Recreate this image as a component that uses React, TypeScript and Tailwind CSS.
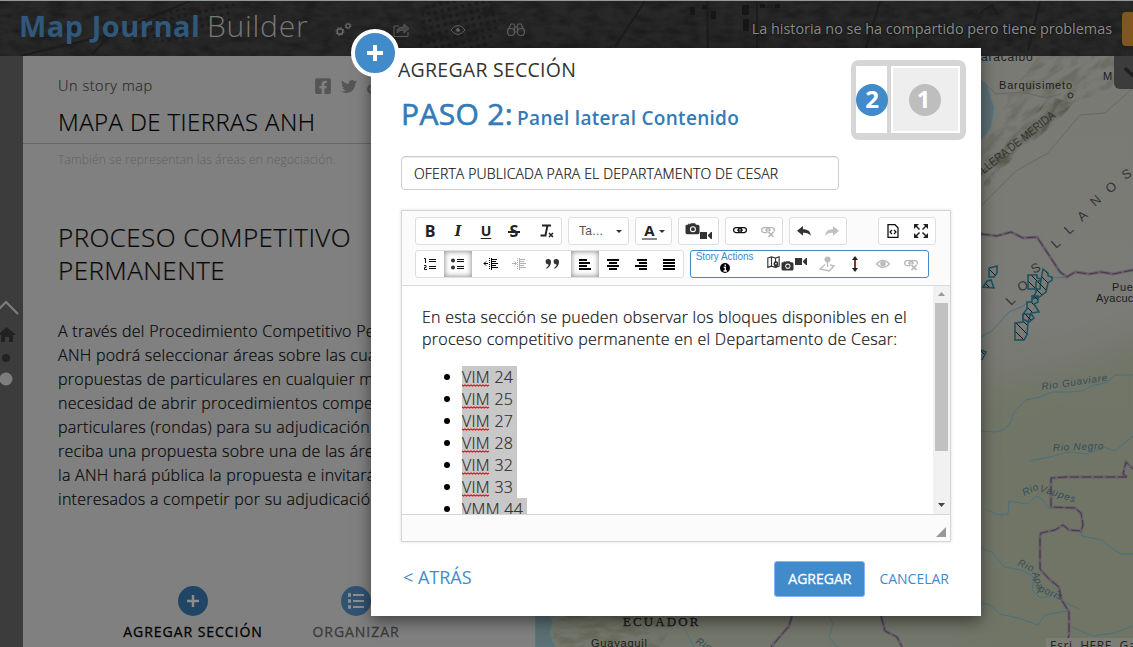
import React from "react";
import { FaTwitter, FaFacebookSquare, FaLink } from "react-icons/fa";

type Kids = { children: React.ReactNode };

function Glyph({ children, cls = "w-4 h-4", box = "0 0 16 16" }: Kids & { cls?: string; box?: string }) {
  return (
    <svg viewBox={box} className={`block shrink-0 ${cls}`} fill="none" stroke="none">
      {children}
    </svg>
  );
}

function Tool({ children, on = false, off = false, w = "w-7" }: Kids & { on?: boolean; off?: boolean; w?: string }) {
  return (
    <span
      className={`flex h-full items-center justify-center ${w} ${off ? "opacity-30" : ""} ${
        on ? "bg-white shadow-[inset_0_0_5px_1px_rgba(0,0,0,0.4)]" : ""
      }`}
    >
      {children}
    </span>
  );
}

function Group({ children, cls = "" }: Kids & { cls?: string }) {
  return <div className={`flex h-7 items-center rounded-[3px] border border-[#dedede] bg-white text-[#222] ${cls}`}>{children}</div>;
}

function Align({ rows }: { rows: [number, number][] }) {
  return (
    <Glyph>
      {rows.map(([x, w], i) => (
        <rect key={i} x={x} y={3 + i * 3} width={w} height={2} fill="#000" />
      ))}
    </Glyph>
  );
}

function Indent({ right = false }: { right?: boolean }) {
  return (
    <Glyph>
      <path d="M6.5 2v12" stroke="#000" strokeDasharray="1 1" />
      <path d="M9 3.5h5M9 5.5h4M9 7.5h6M9 9.5h4M9 11.5h6" stroke="#000" />
      <path d="M8.5 2v12" stroke="#000" />
      <path d={right ? "M1 7.5h4M3.5 5.5l2 2-2 2" : "M5 7.5H1M3 5.5l-2 2 2 2"} stroke="#000" />
    </Glyph>
  );
}

function Camera({ cls }: { cls: string }) {
  return (
    <Glyph cls={cls}>
      <path d="M1 3h2V2h2v1l1-1.5h5L12 3h2a2 2 0 0 1 2 2v7a2 2 0 0 1-2 2H2a2 2 0 0 1-2-2V5a2 2 0 0 1 1-2z" fill="#333" />
      <circle cx="8.5" cy="8.2" r="3.4" fill="#fff" />
      <circle cx="8.5" cy="8.2" r="2.2" fill="#333" />
    </Glyph>
  );
}

function Video() {
  return (
    <Glyph cls="w-3 h-[7px]" box="0 0 12 7">
      <path d="M0 0h7v7H0zM8 3l3-3h1v7h-1L8 4z" fill="#333" />
    </Glyph>
  );
}

function Chain({ broken = false }: { broken?: boolean }) {
  return (
    <Glyph>
      <rect x="1.6" y="4.6" width="8" height="5" rx="2.5" stroke="#111" strokeWidth="1.3" />
      <rect x="6.4" y="4.6" width="8" height="5" rx="2.5" stroke="#111" strokeWidth="1.3" />
      <path d="M5 7.1h6" stroke="#111" />
      {broken && <path d="M7.5 8.5h9v8h-9z" fill="#fff" />}
      {broken && <path d="M8.5 9l5 5m0-5l-5 5" stroke="#111" strokeWidth="1.7" />}
    </Glyph>
  );
}

function Arrow({ flip = false }: { flip?: boolean }) {
  return (
    <Glyph cls={flip ? "w-4 h-4 -scale-x-100" : "w-4 h-4"}>
      <path d="M1 7.8L7 3v3.2c5 0 7.5 2 7.8 6.8-1.8-2.5-4-3.3-7.8-3.2v3z" fill="#333" />
    </Glyph>
  );
}

function Caret() {
  return (
    <Glyph cls="w-[6px] h-[3px]" box="0 0 6 3">
      <path d="M0 0h6L3 3z" fill="#333" />
    </Glyph>
  );
}

function Toolbar() {
  return (
    <div className="flex h-[75px] flex-col gap-[5px] border-b border-[#dadada] bg-[#fbfbfb] pt-1.5 pl-[13px]">
      <div className="flex">
        <Group cls="w-[147px]">
          <Tool><span className="text-[16px] font-bold leading-none">B</span></Tool>
          <Tool><span className="font-['DejaVu_Serif'] text-[14px] font-bold italic leading-none">I</span></Tool>
          <Tool><span className="text-[14px] font-bold leading-none underline underline-offset-2">U</span></Tool>
          <Tool>
            <span className="relative text-[16px] font-bold leading-none">
              S
              <span className="absolute top-[8px] left-[-2px] h-[1.5px] w-3 bg-[#222]" />
            </span>
          </Tool>
          <span className="w-[5px]" />
          <Tool>
            <Glyph>
              <path d="M3 2.5h9M8.5 2.5L6.5 12M1.5 12.5h6" stroke="#222" strokeWidth="1.9" />
              <path d="M10 10l4 4m0-4l-4 4" stroke="#222" strokeWidth="1.5" />
            </Glyph>
          </Tool>
        </Group>
        <Group cls="ml-1.5 w-[61px] justify-between pr-1.5 pl-2.5">
          <span className="font-['Liberation_Sans'] text-[12px] tracking-[0.3px] text-[#555]">Ta...</span>
          <Caret />
        </Group>
        <Group cls="ml-1.5 w-[37px] justify-center gap-0.5">
          <span className="flex h-[17px] w-[15px] items-start justify-center border-b-2 border-[#888] text-[15px] font-bold leading-[15px]">A</span>
          <Caret />
        </Group>
        <Group cls="ml-1.5 w-[41px] justify-center">
          <span className="mb-1"><Camera cls="w-[15px] h-[14px]" /></span>
          <span className="mt-2"><Video /></span>
        </Group>
        <Group cls="ml-1.5 w-[58px]">
          <Tool><Chain /></Tool>
          <Tool off><Chain broken /></Tool>
        </Group>
        <Group cls="ml-1.5 w-[58px]">
          <Tool><Arrow /></Tool>
          <Tool off><Arrow flip /></Tool>
        </Group>
        <Group cls="ml-[31px] w-[58px]">
          <Tool>
            <Glyph>
              <path d="M3 1.7h7l3 3v9.6H3z" stroke="#111" strokeWidth="1.3" />
              <path d="M7 7L5 9l2 2M9 7l2 2-2 2" stroke="#111" strokeWidth="1.2" />
            </Glyph>
          </Tool>
          <Tool>
            <Glyph>
              <path d="M2 2l4.500 4.500M14 2L9.500 6.500M2 14l4.500-4.500M14 14L9.500 9.500" stroke="#222" strokeWidth="1.5" />
              <path d="M1 6V1h5L4.500 2.500 2.500 4.500zM15 6V1h-5l1.500 1.500 2 2zM1 10v5h5l-1.500-1.500-2-2zM15 10v5h-5l1.500-1.500 2-2z" fill="#222" />
            </Glyph>
          </Tool>
        </Group>
      </div>
      <div className="flex">
        <Group cls="w-[269px]">
          <Tool>
            <Glyph>
              <path d="M7 3.500h7M7 5.500h7M7 10.500h7M7 12.500h7" stroke="#111" />
              <path d="M2 2.500h1.500V7M2 9.500h2v2H2.500v2H5" stroke="#111" />
            </Glyph>
          </Tool>
          <Tool on>
            <Glyph>
              <circle cx="3" cy="4.500" r="2" fill="#333" /><circle cx="3" cy="11.500" r="2" fill="#333" />
              <path d="M7 3.500h7M7 5.500h7M7 10.500h7M7 12.500h7" stroke="#111" />
            </Glyph>
          </Tool>
          <span className="w-[5px]" />
          <Tool><Indent /></Tool>
          <Tool off><Indent right /></Tool>
          <span className="w-[5px]" />
          <Tool>
            <Glyph>
              <path d="M4 3a2.700 2.700 0 0 1 3 3c0 3-1.500 5-4.500 7v-1.500C4 10.500 4.600 9.500 4.600 8.400A2.700 2.700 0 0 1 4 3zM12 3a2.700 2.700 0 0 1 3 3c0 3-1.500 5-4.500 7v-1.500c1.500-1 2.100-2 2.100-3.100A2.700 2.700 0 0 1 12 3z" fill="#333" />
            </Glyph>
          </Tool>
          <span className="w-[5px]" />
          <Tool on><Align rows={[[2, 8], [2, 11], [2, 8], [2, 12]]} /></Tool>
          <Tool><Align rows={[[2, 12], [4, 8], [2, 12], [4, 8]]} /></Tool>
          <Tool><Align rows={[[4, 10], [6, 8], [2, 12], [6, 8]]} /></Tool>
          <Tool><Align rows={[[2, 12], [2, 12], [2, 12], [2, 12]]} /></Tool>
        </Group>
        <div className="ml-1.5 flex h-7 w-[239px] items-center rounded-[3px] border border-[#428bca] bg-white">
          <div className="flex w-[69px] flex-col items-center pr-0.5 pb-1">
            <span className="font-['Liberation_Sans'] text-[10px] leading-[12px] tracking-[-0.05px] text-[#428bca]">Story Actions</span>
            <Glyph cls="w-2.5 h-2.5" box="0 0 10 10">
              <circle cx="5" cy="5" r="5" fill="#000" />
              <path d="M5.200 1.500v1.700M3.700 4.400h1.600v3.500M3.500 8h3.500" stroke="#fff" strokeWidth="1.3" />
            </Glyph>
          </div>
          <div className="ml-[7px] flex h-full items-center">
            <span className="mb-1">
              <Glyph cls="w-[13px] h-[13px]">
                <path d="M1 2.500l4.500-1.500 5 1.500 4.500-1.500v11.500l-4.500 1.500-5-1.500L1 14zM5.500 1v11.500M10.500 2.500V8" stroke="#333" strokeWidth="1.4" />
                <path d="M11 6.500a3 3 0 0 1 3 3c0 2-3 5.500-3 5.500s-3-3.500-3-5.500a3 3 0 0 1 3-3z" fill="#333" />
                <circle cx="11" cy="9.500" r="1" fill="#fff" />
              </Glyph>
            </span>
            <span className="mt-1 ml-px"><Camera cls="w-[13px] h-[12px]" /></span>
            <span className="mb-1.5 ml-px"><Video /></span>
          </div>
          <Tool off w="ml-2 w-6">
            <Glyph>
              <circle cx="8.500" cy="3.500" r="3" fill="#222" />
              <path d="M8.500 5v6M6 8.500L1 13l9 2 5-5-4-1" stroke="#222" strokeWidth="1.3" />
            </Glyph>
          </Tool>
          <Tool w="ml-1 w-6">
            <Glyph>
              <path d="M8 2v12" stroke="#8a3a1c" strokeWidth="2" />
              <path d="M8 0l3 4H5zM8 16l3-4H5z" fill="#222" />
            </Glyph>
          </Tool>
          <Tool off w="ml-1 w-6">
            <Glyph>
              <path d="M1.500 8Q8 1 14.500 8 8 15 1.500 8z" stroke="#222" strokeWidth="1.3" />
              <circle cx="8" cy="7.800" r="2.800" fill="#222" />
            </Glyph>
          </Tool>
          <Tool off w="ml-1 w-6"><Chain broken /></Tool>
        </div>
      </div>
    </div>
  );
}

const blocks = ["VIM 24", "VIM 25", "VIM 27", "VIM 28", "VIM 32", "VIM 33", "VMM 44"];

function Squiggle() {
  return (
    <svg viewBox="0 0 28 3" className="absolute bottom-px left-0 h-[3px] w-7" fill="none">
      <path d="M0 1l1.500 1 1.500-1 1.500 1 1.500-1 1.500 1 1.500-1 1.500 1 1.500-1 1.500 1 1.500-1 1.500 1 1.500-1 1.500 1 1.500-1 1.500 1 1.500-1 1.500 1 1.500-1" stroke="#f01010" strokeWidth="1.1" />
    </svg>
  );
}

function Editor() {
  return (
    <div className="mt-5 w-[550px] border border-[#d6d6d6] shadow-[0_0_3px_rgba(0,0,0,0.15)]">
      <Toolbar />
      <div className="flex h-[228px]">
        <div className="flex-1 overflow-hidden pt-5 pl-5 text-[16px] leading-[22px] text-[#111] [-webkit-text-stroke:0.2px]">
          <p className="whitespace-nowrap font-light tracking-[0.235px]">
            En esta sección se pueden observar los bloques disponibles en el
            <br />
            <span className="tracking-[0.27px]">proceso competitivo permanente en el Departamento de Cesar:</span>
          </p>
          <ul className="mt-4 font-light tracking-[0.3px] text-[#2c2c2c]">
            {blocks.map((b, i) => (
              <li key={b} className="flex items-center pl-[22px]">
                <span className="mr-3 h-1.5 w-1.5 rounded-full bg-black" />
                <span className="relative h-[22px] bg-[#c8c8c8] pr-1">
                  {b}
                  {i < 6 && <Squiggle />}
                </span>
              </li>
            ))}
          </ul>
        </div>
        <div className="flex w-[17px] flex-col items-center bg-[#f1f1f1]">
          <Glyph cls="mt-1.5 w-[7px] h-1" box="0 0 7 4"><path d="M0 4h7L3.500 0z" fill="#999" /></Glyph>
          <span className="mt-[7px] h-[148px] w-[13px] bg-[#c1c1c1]" />
          <Glyph cls="mt-auto mb-[7px] w-[7px] h-1" box="0 0 7 4"><path d="M0 0h7L3.500 4z" fill="#444" /></Glyph>
        </div>
      </div>
      <div className="flex h-[27px] items-end justify-end border-t border-[#d6d6d6] bg-[#fbfbfb] pr-1 pb-1">
        <Glyph cls="w-2.5 h-2.5" box="0 0 10 10"><path d="M10 0v10H0z" fill="#999" /></Glyph>
      </div>
    </div>
  );
}

function StepPreview() {
  return (
    <div className="flex h-20 w-[115px] gap-1 rounded-lg bg-[#d6d6d6] pt-1.5 pr-1.5 pb-[7px] pl-[5px]">
      <div className="flex w-[31px] items-center bg-white">
        <span className="flex h-8 w-8 shrink-0 items-center justify-center rounded-full bg-[#428bca] pb-0.5 text-[24px] font-bold text-white">2</span>
      </div>
      <div className="flex flex-1 items-center justify-center border-2 border-white bg-[#eee]">
        <span className="mr-0.5 flex h-8 w-8 items-center justify-center rounded-full bg-[#bebebe] pr-0.5 pb-0.5 text-[24px] font-bold text-white">1</span>
      </div>
    </div>
  );
}

function Modal() {
  return (
    <div className="absolute top-12 left-[371px] h-[568px] w-[610px] bg-white pl-[30px] shadow-[0_5px_15px_rgba(0,0,0,0.5)]">
      <span className="absolute top-[-19px] left-[-20px] flex h-12 w-12 items-center justify-center rounded-full border-4 border-white bg-[#428bca]">
        <Glyph><path d="M8 0v16M0 8h16" stroke="#fff" strokeWidth="4" /></Glyph>
      </span>
      <div className="flex h-[108px] items-start justify-between pr-[15px]">
        <div>
          <h2 className="-ml-[3px] pt-2 text-[19.5px] leading-7 tracking-[0.25px] text-[#333]">AGREGAR SECCIÓN</h2>
          <h3 className="mt-[9px] whitespace-nowrap leading-[42px] text-[#337ab7]">
            <span className="text-[30px] tracking-[0.35px] [-webkit-text-stroke:0.6px]">PASO 2:</span>
            <span className="ml-1 text-[19px] font-semibold tracking-[0.3px]">Panel lateral Contenido</span>
          </h3>
        </div>
        <div className="pt-3"><StepPreview /></div>
      </div>
      <div className="flex h-[34px] w-[438px] items-center rounded border border-[#ccc] pl-3 text-[14px] font-light tracking-[0.15px] text-[#111] shadow-[inset_0_1px_1px_rgba(0,0,0,0.08)] [-webkit-text-stroke:0.2px]">
        OFERTA PUBLICADA PARA EL DEPARTAMENTO DE CESAR
      </div>
      <Editor />
      <div className="mt-[19px] flex h-9 items-center text-[#428bca]">
        <span className="pb-1 pl-0.5 text-[18px]">&lt; ATRÁS</span>
        <span className="ml-auto flex h-9 w-[91px] items-center justify-center rounded-[3px] border border-[#86b4fb] bg-[#428bca] pb-0.5 text-[14px] text-white [-webkit-text-stroke:0.3px]">AGREGAR</span>
        <span className="mr-8 ml-3.5 pb-0.5 text-[14px]">CANCELAR</span>
      </div>
    </div>
  );
}

function Header() {
  return (
    <header className="relative flex h-14 items-start overflow-hidden border-t border-[#939a96] bg-[#282828]">
      <svg className="absolute inset-0 h-full w-full" viewBox="0 0 1133 55">
        <defs>
          <pattern id="dots" width="7" height="7" patternUnits="userSpaceOnUse" patternTransform="rotate(-12)">
            <circle cx="3.500" cy="3.500" r="1.900" fill="#1c1c1c" />
          </pattern>
          <filter id="grain" colorInterpolationFilters="sRGB">
            <feTurbulence type="fractalNoise" baseFrequency="0.06 0.12" numOctaves="4" seed="4" />
            <feColorMatrix values="0 0 0 0 0  0 0 0 0 0  0 0 0 0 0  1.200 0 0 0 -0.450" />
          </filter>
        </defs>
        <rect width="1133" height="55" filter="url(#grain)" opacity="0.5" />
        <path d="M150 12l85-12-5 20-50 20-50 3zM424 0h70l8 18-16 30h-70z" fill="url(#dots)" />
        <path d="M20 55l92-22L190 0M112 33l-20 20M645 0l-30 46M707 0l1 50M757 0v52M880 0l-15 50M980 12l12-8 6 10M1040 0l-12 50" stroke="#1c1c1c" strokeWidth="2" fill="none" />
        <path d="M690 6h5v8h-5zM702 4h5v4h-5zM711 10h5v8h-5zM742 4h7v10h-7zM760 3h5v4h-5zM775 3h5v4h-5zM743 18h6v12h-6z" fill="#161616" />
      </svg>
      <h1 className="relative ml-[19px] flex w-[290px] text-[29px] leading-[50px] whitespace-nowrap text-[#777]">
        <span className="w-[188px] font-bold tracking-[0.5px] text-[#30587c]">Map Journal</span>
        <span className="text-[30px] font-light tracking-[0.75px]">Builder</span>
      </h1>
      <div className="relative mt-[21px] ml-[26px] flex h-4 items-center text-[#5c5c5c]">
        <svg viewBox="0 0 18 16" className="h-4 w-[18px]" fill="none" stroke="#6b6b6b">
          <circle cx="5" cy="9.500" r="2.800" strokeWidth="1.5" /><circle cx="5" cy="9.500" r="4" strokeDasharray="1.5 1.64" />
          <circle cx="13" cy="4" r="2" strokeWidth="1.2" /><circle cx="13" cy="4" r="3" strokeDasharray="1.2 1.15" />
        </svg>
        <svg viewBox="0 0 17 15" className="ml-10 h-[15px] w-[17px]" fill="none" stroke="#5a5a5a" strokeWidth="1">
          <path d="M6 3H1v10.500h14V9" /><path d="M4 10c0-5 3-6 7-6V1l5 4.500-5 4.500V7C8 7 6 7.500 4 10z" fill="#444" />
        </svg>
        <svg viewBox="0 0 16 12" className="ml-10 h-3 w-4" fill="none" stroke="#5a5a5a"><path d="M1 6Q8-3 15 6 8 15 1 6z" /><circle cx="8" cy="6" r="1.500" fill="#666" /></svg>
        <svg viewBox="0 0 18 14" className="ml-[41px] h-[14px] w-[18px]" fill="none" stroke="#5c5c5c" strokeWidth="1.2">
          <circle cx="4" cy="9" r="3.500" /><circle cx="14" cy="9" r="3.500" /><path d="M1 7l3-6h3l1 3h2l1-3h3l3 6M7.500 4v5M10.500 4v5M7.500 9h3" />
        </svg>
      </div>
      <span className="relative mt-4 ml-auto text-[14.4px] leading-6 whitespace-nowrap text-[#8c8c8c] [text-shadow:0_0_2px_#000]">La historia no se ha compartido pero tiene problemas</span>
      <span className="relative mt-[11px] ml-2.5 h-[34px] w-[11px] rounded-l bg-[#805621]" />
    </header>
  );
}

const story = [
  "A través del Procedimiento Competitivo Permanente la",
  "ANH podrá seleccionar áreas sobre las cuales recibirá",
  "propuestas de particulares en cualquier momento, sin",
  "necesidad de abrir procedimientos competitivos con",
  "particulares (rondas) para su adjudicación. Cuando se",
  "reciba una propuesta sobre una de las áreas ofrecidas",
  "la ANH hará pública la propuesta e invitará a otros",
  "interesados a competir por su adjudicación.",
];

function SidePanel() {
  return (
    <section className="flex w-[512px] shrink-0 flex-col overflow-hidden bg-[#808080] whitespace-nowrap text-[#080808]">
      <div className="h-[88px] border-b border-[#666] pt-[18px] pl-[35px]">
        <div className="flex h-6 items-center text-[14.5px] text-[#2c2c2c]">
          <span className="w-[257px] font-light tracking-[0.55px] [-webkit-text-stroke:0.2px]">Un story map</span>
          <FaFacebookSquare className="h-[18px] w-4 text-[#555]" />
          <FaTwitter className="ml-2.5 h-[17px] w-4 text-[#555]" />
          <FaLink className="ml-2.5 h-4 w-4 text-[#555]" />
        </div>
        <h2 className="pt-1.5 text-[24px] leading-9 font-light tracking-[0.42px] text-black [-webkit-text-stroke:0.2px]">MAPA DE TIERRAS ANH</h2>
      </div>
      <div className="pl-[35px]">
        <p className="pt-1.5 text-[12px] leading-5 font-light tracking-[0.18px] text-[#606060]">También se representan las áreas en negociación.</p>
        <h3 className="mt-[51px] text-[26px] leading-[33px] font-light tracking-[0.42px] text-[#080808] [-webkit-text-stroke:0.2px]">PROCESO COMPETITIVO<br />PERMANENTE</h3>
        <div className="mt-8 text-[16px] leading-6 font-light tracking-[0.27px] [-webkit-text-stroke:0.2px]">
          {story.map((s) => <p key={s}>{s}</p>)}
        </div>
      </div>
      <div className="mt-auto flex h-[61px] pl-[99px] text-center text-[14px] tracking-[0.95px]">
        <div className="flex w-[142px] flex-col items-center">
          <span className="flex h-[30px] w-[30px] items-center justify-center rounded-full bg-[#214665]">
            <Glyph cls="w-3 h-3" box="0 0 12 12"><path d="M6 0v12M0 6h12" stroke="#8c8c8c" strokeWidth="2.5" /></Glyph>
          </span>
          <span className="mt-1.5 leading-5 text-black [-webkit-text-stroke:0.3px]">AGREGAR SECCIÓN</span>
        </div>
        <div className="ml-[47px] flex w-[90px] flex-col items-center">
          <span className="flex h-[30px] w-[30px] items-center justify-center rounded-full bg-[#315372]">
            <Glyph cls="w-[18px] h-[18px]" box="0 0 18 18">
              <path d="M1 3h3M1 9h3M1 15h3" stroke="#8f8f8f" strokeWidth="3.5" /><path d="M6 3h11M6 9h11M6 15h11" stroke="#8f8f8f" strokeWidth="2.2" />
            </Glyph>
          </span>
          <span className="mt-1.5 leading-5 text-[#3b3b3b] [-webkit-text-stroke:0.3px]">ORGANIZAR</span>
        </div>
      </div>
    </section>
  );
}

const border =
  "M981 234l16 2 14-4 12 6 14-1 23 35 7 5 8-5 14 2 12-2 12 2 20-4M1127 477l-4-3 3-12 7 7M1127 477h-61l-15 1v29l24 1 6 5 2 12-2 6-12-1-6-5-8 5-14 3-1 3v33l9 10 10 8 2 12 8 13v23l-4 16M792 616l-3 10-18 21M881 616l4 15 12 6 5 10";

function MapView() {
  return (
    <svg className="h-full w-full" viewBox="535 56 598 591" preserveAspectRatio="none" fontFamily="Liberation Sans" fill="none">
      <defs>
        <linearGradient id="land" x1="0" y1="0" x2="0" y2="1">
          <stop offset="0" stopColor="#7a7a75" /><stop offset="0.45" stopColor="#7b7b77" /><stop offset="0.6" stopColor="#75786c" /><stop offset="1" stopColor="#73766a" />
        </linearGradient>
        <pattern id="hatch" width="9" height="9" patternUnits="userSpaceOnUse"><path d="M0 0l9 9" stroke="#161616" /></pattern>
        <filter id="relief" x="0" y="0" width="100%" height="100%" colorInterpolationFilters="sRGB">
          <feTurbulence type="fractalNoise" baseFrequency="0.05 0.14" numOctaves="4" seed="8" />
          <feColorMatrix values="0 0 0 0 0.3  0 0 0 0 0.31  0 0 0 0 0.23  3.500 0 0 0 -1.500" />
        </filter>
        <filter id="soft"><feGaussianBlur stdDeviation="14" /></filter>
        <clipPath id="ridge"><path d="M981 150l18-30 10-26 30-38h94v24l-65 25-22 26-40 28-25 40z" /></clipPath>
        <clipPath id="peaks"><path d="M981 172l35-38 35-38 22 8-18 20-35 28-39 40z" /></clipPath>
        <clipPath id="andes"><path d="M560 616h120l-20 31h-110z" /></clipPath>
      </defs>
      <rect x="535" y="56" width="598" height="591" fill="url(#land)" />
      <path d="M1160 335q-60 10-75 30-80 15-110 40v260h200z" fill="#707565" opacity="0.7" filter="url(#soft)" />
      <path d="M981 80l6 4 7 24-3 20-10 12zM535 610h14l4 12-3 12 5 13h-20z" fill="#5c6f73" stroke="#587e8c" />
      <g clipPath="url(#ridge)" opacity="0.3"><rect x="900" y="0" width="380" height="260" filter="url(#relief)" transform="rotate(-35 1050 120)" /></g>
      <g clipPath="url(#peaks)" opacity="0.65"><rect x="900" y="0" width="380" height="260" filter="url(#relief)" transform="rotate(-45 1030 130)" /></g>
      <g clipPath="url(#andes)" opacity="0.3"><rect x="550" y="606" width="140" height="50" filter="url(#relief)" /></g>
      <path d="M981 80l15 14 26-2 24 6 15-4M981 206l35-35 32-18 32-38 25-2 28-25" stroke="#66665f" strokeWidth="0.9" />
      <g stroke="#49717f" strokeWidth="1">
        <path d="M981 337l11-6 17-19 12-5 15-9M1052 278l16-1" />
        <path d="M981 431l14 1 9-2 7-8 3-10 12-12 14-3 12-5h16l14-1 12-6 12-2 9-8h18" />
        <path d="M1029 461l21-4 18-5 20 2 15-7 12 4 18-15" />
        <path d="M987 510l12 5 9-1 1-13 18 3 10-8 6 4 6 9 6-2" />
        <path d="M981 548l11 4 12 15 17 3 13 7-2 13 8 8 14-3 12 8 13 6M981 603l9 2 10 9 18 4 20 7 7-10 22-4M1080 530l2 6 20 4 12 10 8 4h11M1070 626l22 10 22-3 19-7" />
        <path d="M829 616l4 8-4 13 8 10M675 616l10 14 9 17" />
      </g>
      <path d={border} stroke="#695e6b" strokeWidth="3" />
      <path d={border} stroke="#443747" strokeDasharray="9 3" />
      <g fill="url(#hatch)" stroke="#195261" strokeWidth="1.5">
        <path d="M989 268l8-2v7l-3 4h-5zM983 287l4-6 4-1 3 8z" />
        <path d="M1028 275h9v3l4 1-1 10h-12z" />
        <path d="M1043 269l5 4v3l4 1v3l-4 3-2 9-4 3-4 3h-5l3-6v-10l5-2z" />
        <path d="M1032 296h6v6l-4 2 5 8-8 1-3 9-5-3v-5l4-5v-7h5z" />
        <path d="M1023 314h5l4 1 2 3-6 5-1 12-3 5h-9v-17l8-1z" />
        <path d="M981 350l5 2-4 8" />
      </g>
      <g fill="#1c1c1c" fontSize="11" letterSpacing="0.8">
        <text x="981" y="61" fontSize="12">aracaibo</text><text x="999" y="89">Barquisimeto</text><text x="1103" y="80">M</text>
        <text x="1112" y="291" letterSpacing="0.6">Pue</text><text x="1096" y="302" letterSpacing="0.3">Ayacuc</text><text x="591" y="647">Guayaquil</text>
      </g>
      <circle cx="1070.500" cy="95.500" r="2.500" stroke="#222" />
      <text transform="translate(984 174) rotate(-38.5)" fill="#333" fontSize="12" textLength="92" lengthAdjust="spacingAndGlyphs">LLERA DE MERIDA</text>
      <g fill="#353535" fontSize="13">
        <text transform="translate(1056 249) rotate(-42)">L</text><text transform="translate(1069 235) rotate(-42)">L</text><text transform="translate(1082 222) rotate(-42)">A</text>
        <text transform="translate(1095 207) rotate(-42)">N</text><text transform="translate(1110 194) rotate(-40)">O</text><text transform="translate(1125 180) rotate(-30)">S</text>
        <text transform="translate(1011 306) rotate(-45)">L</text><text transform="translate(1020 292) rotate(-25)">O</text><text transform="translate(1034 274) rotate(-30)">S</text>
      </g>
      <g fill="#344d59" fontSize="10" letterSpacing="0.7" fontStyle="italic">
        <text transform="translate(1042 390) rotate(-8)">Rio Guaviare</text><text transform="translate(1053 451) rotate(-2)">Rio Negro</text>
        <text transform="translate(1024 496) rotate(-24)">Rio</text><text transform="translate(1039 491) rotate(18)">Vaupes</text>
        <text transform="translate(1017 565) rotate(24)">Rio</text><text transform="translate(1032 573) rotate(72)" letterSpacing="0">Apa</text><text transform="translate(1038 591) rotate(22)">poris</text>
        <text transform="translate(695 643) rotate(30)">Rio</text>
      </g>
      <text x="623" y="626" fill="#191919" stroke="#191919" strokeWidth="0.3" fontFamily="Liberation Serif" fontSize="13" letterSpacing="2.1">ECUADOR</text>
      <rect x="1046" y="638" width="87" height="9" fill="#7c7d77" />
      <text x="1050" y="650" fill="#222" fontFamily="Open Sans" fontSize="12" letterSpacing="0.6">Esri, HERE, Ga</text>
    </svg>
  );
}

export default function App() {
  return (
    <div className="relative flex h-[647px] w-[1133px] flex-col overflow-hidden bg-[#808080] font-['Open_Sans',sans-serif]">
      <Header />
      <main className="flex h-[591px]">
        <nav className="flex w-[23px] shrink-0 flex-col bg-[#3c3c3c] pt-[243px]">
          <svg viewBox="0 0 20 90" className="h-[90px] w-5" fill="none">
            <path d="M-6 15L6 3l12 12" stroke="#7d7d7d" strokeWidth="2.2" />
            <path d="M6.500 28L16 36h-3v7H9v-5H5v5H1v-7h-3z" fill="#222" />
            <circle cx="6" cy="59" r="4" fill="#222" /><circle cx="6" cy="80" r="6.500" fill="#7d7d7d" />
          </svg>
        </nav>
        <SidePanel />
        <div className="relative min-w-0 flex-1">
          <MapView />
          <span className="absolute top-0 right-0 flex h-[33px] w-[19px] items-center justify-end overflow-hidden rounded-bl-md bg-[#3c3c3c]">
            <svg viewBox="0 0 9 12" className="h-3 w-[9px]" fill="none"><path d="M1 1l7 7 7-7" stroke="#202020" strokeWidth="3.5" /></svg>
          </span>
        </div>
      </main>
      <Modal />
    </div>
  );
}
